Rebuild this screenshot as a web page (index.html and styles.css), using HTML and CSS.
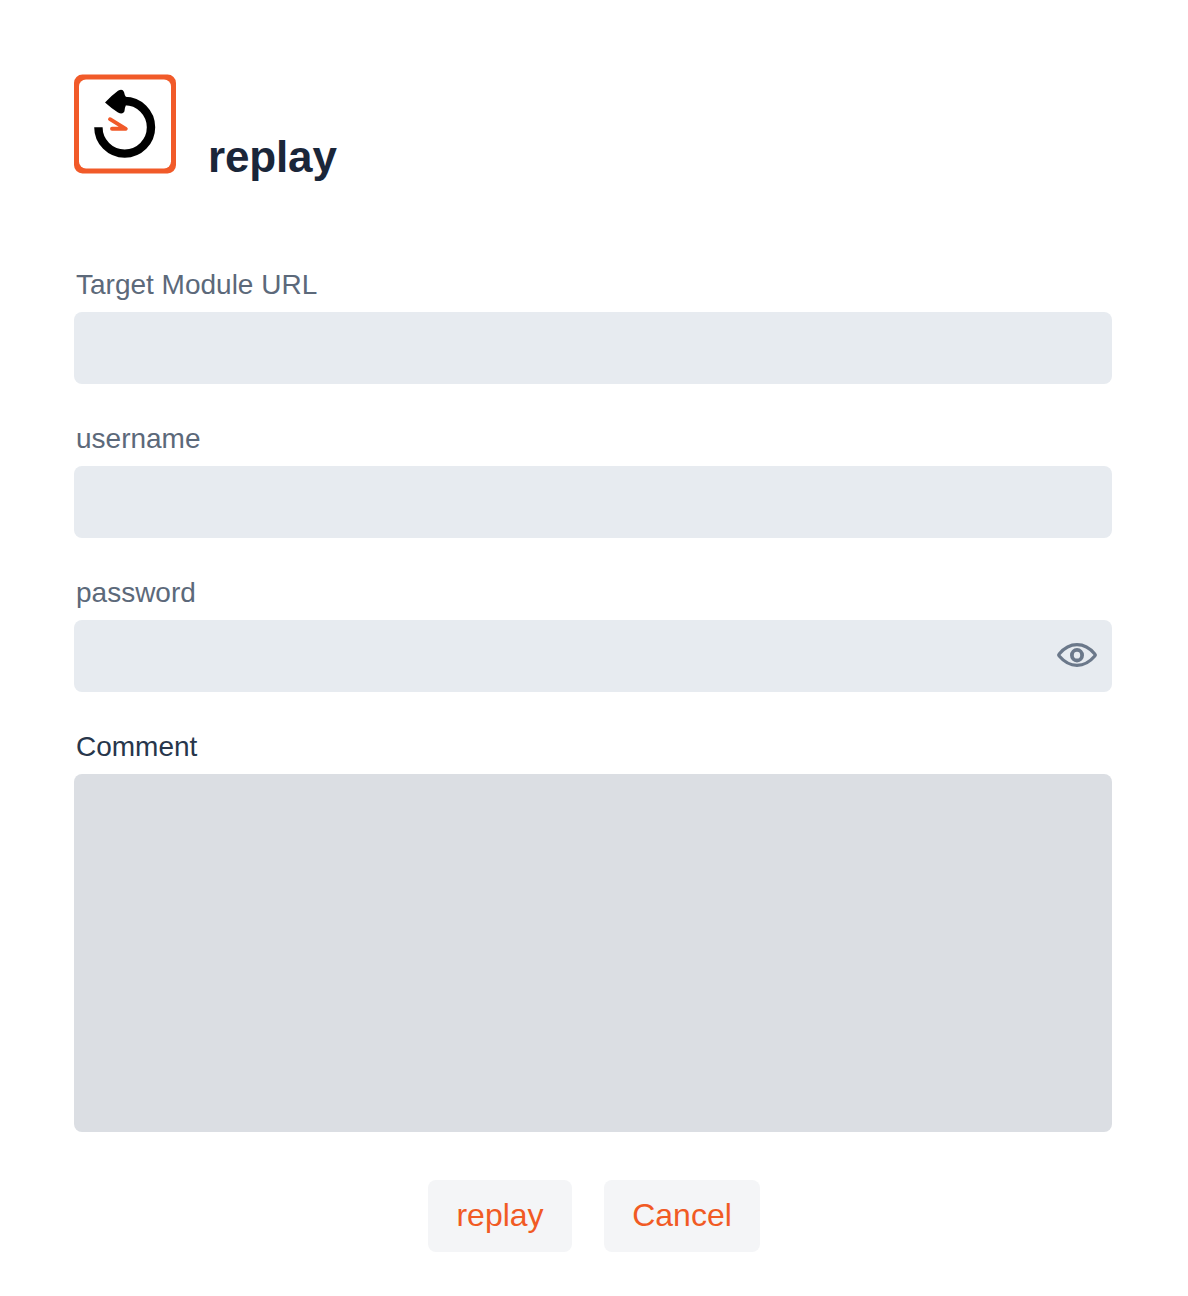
FILE: index.html
```html
<!DOCTYPE html>
<html lang="en">
<head>
<meta charset="utf-8">
<title>replay</title>
<link rel="stylesheet" href="styles.css">
</head>
<body>
<form class="dialog">
  <header class="header">
    <svg class="logo" viewBox="0 0 102 100" aria-hidden="true">
      <rect x="0" y="0.500" width="102" height="99" rx="8.500" fill="#f15a29"/>
      <rect x="5" y="5.500" width="92" height="89" rx="7" fill="#fff"/>
      <path d="M24.4 53.3A26.3 26.3 0 1 0 50.7 27" fill="none" stroke="#000" stroke-width="8.4"/>
      <path d="M31 28.500Q37 22 44 16.800Q48.500 14.200 50 18Q50.500 21.500 52.500 24L51.800 31.500Q50.600 34 50.400 37.500Q48.500 41 44 38.500Q37 34 31 28.500Z"/>
      <path d="M36 45.200 51.800 54.800H38" fill="none" stroke="#f15a29" stroke-width="3.900" stroke-linecap="round" stroke-linejoin="round"/>
    </svg>
    <h1 class="title">replay</h1>
  </header>
  <div class="field">
    <label class="label" for="url">Target Module URL</label>
    <input class="input" id="url" type="text">
  </div>
  <div class="field">
    <label class="label" for="username">username</label>
    <input class="input" id="username" type="text">
  </div>
  <div class="field">
    <label class="label" for="password">password</label>
    <div class="password">
      <input class="input" id="password" type="password">
      <svg class="eye" viewBox="0 0 40 24" fill="none" stroke="#6b788a" aria-hidden="true">
        <path d="M2.200 11C7 5.300 13 1.700 20 1.700S33 5.300 37.800 11Q38.700 12 37.800 13C33 18.700 27 22.300 20 22.300S7 18.700 2.200 13Q1.300 12 2.200 11Z" stroke-width="3.200" stroke-linejoin="round"/>
        <ellipse cx="20" cy="12.200" rx="5.100" ry="5.300" stroke-width="3.800"/>
      </svg>
    </div>
  </div>
  <div class="field">
    <label class="label label-dark" for="comment">Comment</label>
    <textarea class="input comment" id="comment"></textarea>
  </div>
  <div class="actions">
    <button class="button" type="button">replay</button>
    <button class="button cancel" type="button">Cancel</button>
  </div>
</form>
</body>
</html>
```
FILE: styles.css
```css
* {
  box-sizing: border-box;
}

body {
  margin: 0;
  background: #fff;
  font-family: "Liberation Sans", Arial, sans-serif;
}

.dialog {
  width: 1188px;
  height: 1296px;
  padding: 74px 76px 44px 74px;
}

.header {
  display: flex;
  gap: 32px;
  height: 192px;
}

.logo {
  width: 102px;
  height: 100px;
}

.title {
  margin: 58px 0 0;
  color: #1a2639;
  font-size: 44px;
  line-height: 50px;
  letter-spacing: -0.15px;
}

.field + .field {
  margin-top: 36px;
}

.label {
  display: block;
  height: 46px;
  padding-left: 2px;
  color: #5c697a;
  font-size: 28px;
  line-height: 37px;
}

.label-dark {
  color: #27364b;
}

.input {
  display: block;
  width: 1038px;
  height: 72px;
  padding: 0 16px;
  border: 0;
  border-radius: 8px;
  outline: 0;
  background: #e7ebf0;
  font: inherit;
  font-size: 28px;
}

.password {
  position: relative;
}

.eye {
  position: absolute;
  top: 23px;
  right: 15px;
  width: 40px;
  height: 24px;
}

.comment {
  height: 358px;
  padding: 16px;
  background: #dbdee3;
  resize: none;
}

.actions {
  display: flex;
  justify-content: center;
  gap: 32px;
  width: 1040px;
  margin-top: 48px;
}

.button {
  width: 144px;
  height: 72px;
  padding: 0 0 2px;
  border: 0;
  border-radius: 8px;
  background: #f4f5f7;
  color: #f15a24;
  font: inherit;
  font-size: 32px;
}

.cancel {
  width: 156px;
}
```
